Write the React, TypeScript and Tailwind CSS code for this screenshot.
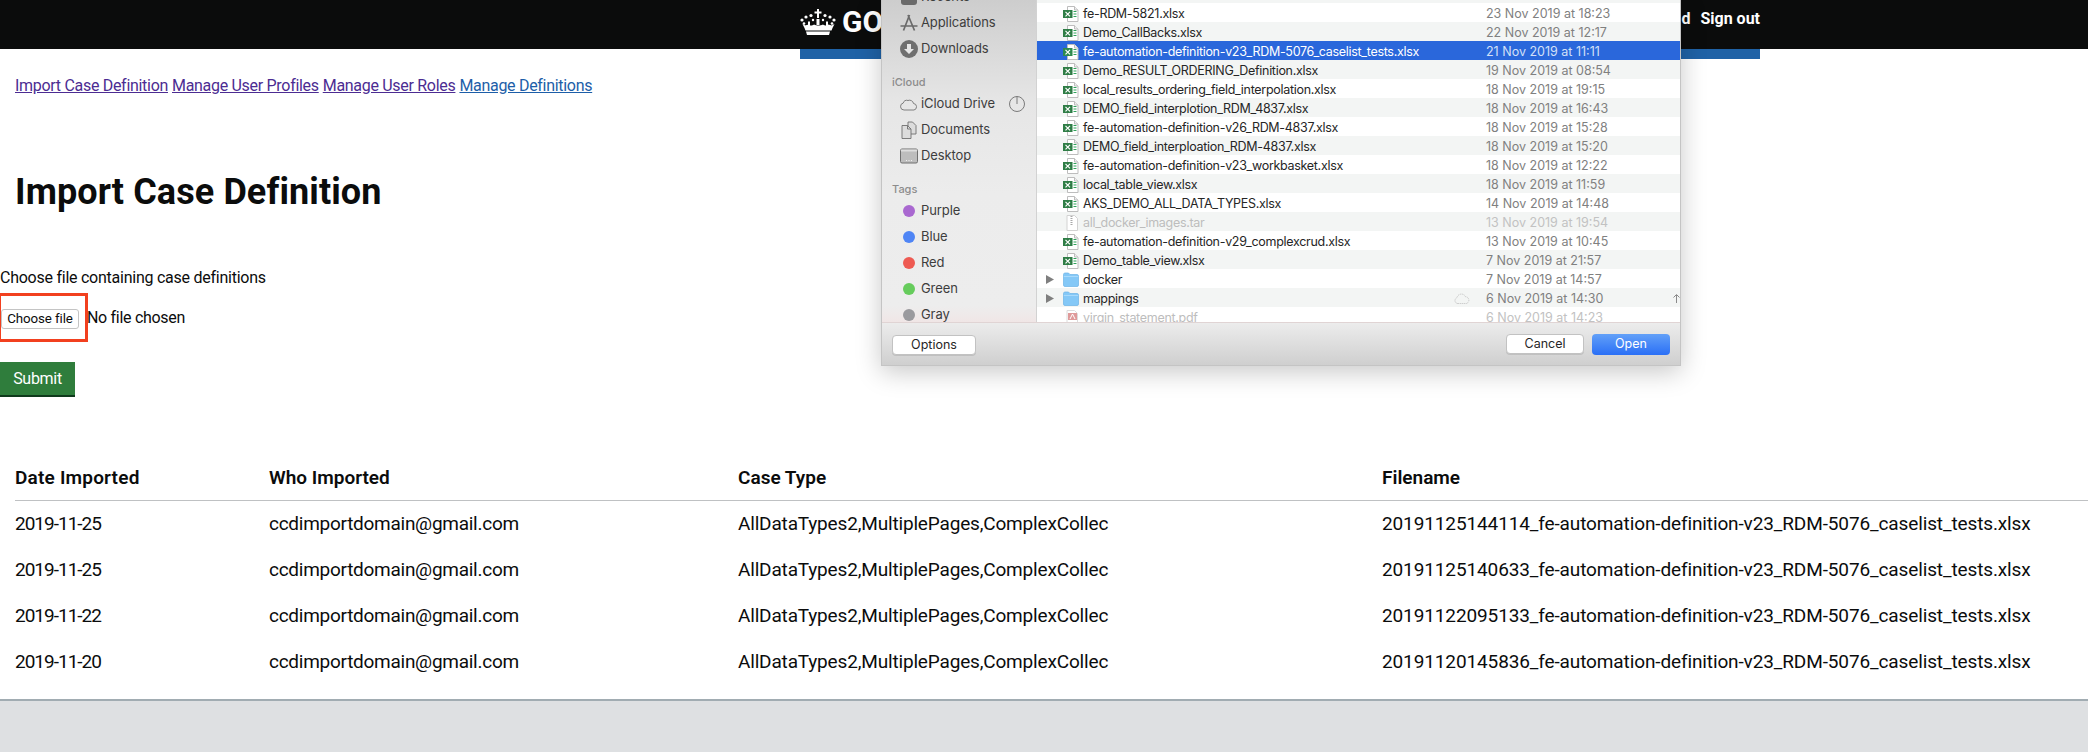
import React from "react";

const gds = { fontFamily: "Roboto, 'Liberation Sans', sans-serif" };
const mac = { fontFamily: "Inter, 'Liberation Sans', sans-serif" };

function Crown() {
  const dots: [number, number, number][] = [
    [2, 11, 1.6], [6, 8, 1.6], [11, 6.5, 1.6], [25, 6.5, 1.6], [30, 8, 1.6], [34, 11, 1.6],
    [4, 14.5, 1.3], [32, 14.5, 1.3], [13, 11, 1.2], [23, 11, 1.2],
  ];
  return (
    <svg width="36" height="26" viewBox="0 0 36 26" fill="#fff" className="shrink-0">
      {dots.map(([x, y, r], i) => <circle key={i} cx={x} cy={y} r={r} />)}
      <path d="M17 0h2v2.500h2.500v2H19V9h-2V4.500h-2.500v-2H17z" />
      <path d="M16.500 10h3v6h-3zM8 12.500h2v4.500H8zM26 12.500h2V17h-2zM5.500 16.500h25v1.500h-25z" />
      <path d="M4.500 19l-2-4 3 1.500 3-1 2.500 2 3-2 4.500 2 4.500-2 3 2 2.500-2 3 1 3-1.500-2 4-1 2.500H5.500z" />
      <path d="M6 22.500h24L29 26H7z" />
    </svg>
  );
}

function Excel({ selected }: { selected?: boolean }) {
  return (
    <svg width="16" height="16" viewBox="0 0 16 16" className="shrink-0">
      <path d="M4.500.5h7l3.500 3.500v11.500h-10.500z" fill="#fff" stroke="#bdbdbd" />
      <path d="M11.500.5v3.500h3.500" fill="#eee" stroke="#bdbdbd" />
      <rect x="0" y="4" width="9.500" height="8" fill={selected ? "#2e8a4f" : "#2f7d46"} />
      <path d="M2.500 5.800l4.500 4.500M7 5.800l-4.500 4.500" stroke="#fff" strokeWidth="1.200" />
      <path d="M10.500 5.500h3M10.500 8h3M10.500 10.500h3" stroke="#2fa35a" strokeWidth="1" />
    </svg>
  );
}

function TarIcon() {
  return (
    <svg width="16" height="16" viewBox="0 0 16 16" className="shrink-0">
      <path d="M4 .5h7.500l3 3v12H4z" fill="#fff" stroke="#d2d2d2" />
      <path d="M8.500 1v9" stroke="#a8a8a8" strokeWidth="2" strokeDasharray="1 1" />
    </svg>
  );
}

function PdfIcon() {
  return (
    <svg width="16" height="16" viewBox="0 0 16 16" className="shrink-0">
      <path d="M4 .5h7.500l3 3v12H4z" fill="#fff" stroke="#dcdcdc" />
      <rect x="5" y="3" width="9" height="7" fill="#df9a9a" />
      <path d="M7 9l2.500-5L12 9" stroke="#fff" fill="none" />
    </svg>
  );
}

function Folder() {
  return (
    <svg width="16" height="15" viewBox="0 0 16 15" className="shrink-0">
      <path d="M.5 2.500a1.500 1.500 0 0 1 1.500-1.500h3.500l1.500 1.500h7a1.500 1.500 0 0 1 1.500 1.500v9a1.500 1.500 0 0 1-1.500 1.500H2A1.500 1.500 0 0 1 .5 13z" fill="#84c8f7" stroke="#6cb3e6" strokeWidth="0.700" />
      <path d="M.8 4.500h14.400" stroke="#a9dafb" />
    </svg>
  );
}

type FileRow = { n: string; d: string; kind: "x" | "tar" | "pdf" | "dir"; off?: boolean; sel?: boolean; cloud?: boolean };

const files: FileRow[] = [
  { n: "fe-RDM-5821.xlsx", d: "23 Nov 2019 at 18:23", kind: "x" },
  { n: "Demo_CallBacks.xlsx", d: "22 Nov 2019 at 12:17", kind: "x" },
  { n: "fe-automation-definition-v23_RDM-5076_caselist_tests.xlsx", d: "21 Nov 2019 at 11:11", kind: "x", sel: true },
  { n: "Demo_RESULT_ORDERING_Definition.xlsx", d: "19 Nov 2019 at 08:54", kind: "x" },
  { n: "local_results_ordering_field_interpolation.xlsx", d: "18 Nov 2019 at 19:15", kind: "x" },
  { n: "DEMO_field_interplotion_RDM_4837.xlsx", d: "18 Nov 2019 at 16:43", kind: "x" },
  { n: "fe-automation-definition-v26_RDM-4837.xlsx", d: "18 Nov 2019 at 15:28", kind: "x" },
  { n: "DEMO_field_interploation_RDM-4837.xlsx", d: "18 Nov 2019 at 15:20", kind: "x" },
  { n: "fe-automation-definition-v23_workbasket.xlsx", d: "18 Nov 2019 at 12:22", kind: "x" },
  { n: "local_table_view.xlsx", d: "18 Nov 2019 at 11:59", kind: "x" },
  { n: "AKS_DEMO_ALL_DATA_TYPES.xlsx", d: "14 Nov 2019 at 14:48", kind: "x" },
  { n: "all_docker_images.tar", d: "13 Nov 2019 at 19:54", kind: "tar", off: true },
  { n: "fe-automation-definition-v29_complexcrud.xlsx", d: "13 Nov 2019 at 10:45", kind: "x" },
  { n: "Demo_table_view.xlsx", d: "7 Nov 2019 at 21:57", kind: "x" },
  { n: "docker", d: "7 Nov 2019 at 14:57", kind: "dir" },
  { n: "mappings", d: "6 Nov 2019 at 14:30", kind: "dir", cloud: true },
  { n: "virgin_statement.pdf", d: "6 Nov 2019 at 14:23", kind: "pdf", off: true },
];

function Row({ f, i }: { f: FileRow; i: number }) {
  const bg = f.sel ? "bg-[#2a67db]" : i % 2 === 0 ? "bg-white" : "bg-[#f3f5f4]";
  const nameColor = f.sel ? "text-white" : f.off ? "text-[#bdbdbd]" : "text-[#262626]";
  const dateColor = f.sel ? "text-[#d3e0f7]" : f.off ? "text-[#c2c2c2]" : "text-[#808080]";
  return (
    <div className={`flex items-center h-[19px] pt-[2px] shrink-0 ${bg}`}>
      <div className="w-[26px] shrink-0 pl-[9px]">
        {f.kind === "dir" && (
          <svg width="8" height="9" viewBox="0 0 8 9"><path d="M0 0l8 4.500L0 9z" fill="#7f7f7f" /></svg>
        )}
      </div>
      <div className="w-[20px] shrink-0 flex">
        {f.kind === "x" && <Excel selected={f.sel} />}
        {f.kind === "tar" && <TarIcon />}
        {f.kind === "pdf" && <PdfIcon />}
        {f.kind === "dir" && <Folder />}
      </div>
      <div className={`w-[371px] shrink-0 text-[12.500px] leading-[15px] tracking-[-0.3px] whitespace-nowrap ${nameColor}`}>{f.n}</div>
      <div className="w-[32px] shrink-0">
        {f.cloud && (
          <svg width="16" height="11" viewBox="0 0 16 11" fill="none" stroke="#bdbdbd" strokeDasharray="1 1">
            <path d="M3.500 10.500a3 3 0 0 1-.5-5.800 4.500 4.500 0 0 1 8.500-1 3.500 3.500 0 0 1 1 6.800z" />
          </svg>
        )}
      </div>
      <div className={`w-[187px] shrink-0 text-[12.500px] leading-[15px] whitespace-nowrap ${dateColor}`}>{f.d}</div>
      {f.cloud && (
        <svg width="7" height="9" viewBox="0 0 7 9" fill="none" stroke="#8a8a8a" className="shrink-0">
          <path d="M3.500 9V1M.5 3.500l3-3 3 3" />
        </svg>
      )}
    </div>
  );
}

const iconProps = { width: 18, height: 18, viewBox: "0 0 18 18", className: "shrink-0" };

const sideIcons: Record<string, React.ReactNode> = {
  Recents: <svg {...iconProps}><rect x="1" y="1" width="16" height="16" rx="3" fill="#6a6a6a" /></svg>,
  Applications: (
    <svg {...iconProps} fill="none" stroke="#6a6a6a" strokeWidth="1.700">
      <path d="M9.500 1L3.500 16.500M8 1L14.500 16.500M.5 12h17" />
    </svg>
  ),
  Downloads: (
    <svg {...iconProps}>
      <circle cx="9" cy="9" r="9" fill="#6f6f6f" />
      <path d="M7 4h4v5h3l-5 5-5-5h3z" fill="#e6e6e6" />
    </svg>
  ),
  "iCloud Drive": (
    <svg {...iconProps} fill="none" stroke="#747474" strokeWidth="0.900">
      <path d="M4 15a3.500 3.500 0 0 1-.8-6.900A3.500 3.500 0 0 1 8 5.500 4 4 0 0 1 13.500 8.500 3.300 3.300 0 0 1 14 15z" />
    </svg>
  ),
  Documents: (
    <svg {...iconProps} fill="#dcdcdc" stroke="#6f6f6f" strokeWidth="0.900">
      <path d="M8 1h4.500L16 4.500V13H8z" />
      <path d="M2 4.500h5.500L11 8v9.500H2z" />
      <path d="M7.500 4.500V8H11" fill="none" />
    </svg>
  ),
  Desktop: (
    <svg {...iconProps}>
      <rect x=".5" y="2" width="17" height="14" rx="1.500" fill="#bdbdbd" stroke="#6f6f6f" />
      <rect x="1" y="2.500" width="16" height="2" fill="#dedede" />
      <path d="M6 13.500h1M8.500 13.500h1M11 13.500h1" stroke="#f0f0f0" />
    </svg>
  ),
};

function SideItem({ label, children }: { label: string; children?: React.ReactNode }) {
  return (
    <div className="flex items-center h-[26px] pl-[18px] text-[#3d3d3d] text-[13px] tracking-[-0.1px]">
      <div className="w-[21px] flex justify-start shrink-0">{sideIcons[label]}</div>
      <span>{label}</span>
      {children}
    </div>
  );
}

function SideHead({ label }: { label: string }) {
  return (
    <div className="h-[29px] flex items-end pb-[2px] pl-[10px] text-[11px] leading-[14px] font-medium text-[#8c8c8c]">{label}</div>
  );
}

function Tag({ label, color }: { label: string; color: string }) {
  return (
    <div className="flex items-center h-[26px] pl-[21px] text-[#3d3d3d] text-[13px] tracking-[-0.1px]">
      <span className={`w-[12px] h-[12px] rounded-full mr-[6px] shrink-0 ${color}`} />
      <span>{label}</span>
    </div>
  );
}

function Dialog() {
  return (
    <div style={mac} className="absolute left-[881px] top-0 w-[800px] h-[366px] flex flex-col overflow-hidden bg-white shadow-[0_6px_24px_rgba(0,0,0,0.22)] border-x border-b border-[#c4c4c4]">
      <div className="flex h-[323px] shrink-0 overflow-hidden border-b border-[#e0d4d4]">
        <div className="w-[155px] shrink-0 border-r border-[#d2d2d2] bg-[linear-gradient(180deg,#cdcdcd_0%,#e6e6e6_32%,#ececec_60%,#ededed_95%,#f0e6e6_100%)]">
          <div className="-mt-[16px]">
            <SideItem label="Recents" />
            <SideItem label="Applications" />
            <SideItem label="Downloads" />
            <SideHead label="iCloud" />
            <SideItem label="iCloud Drive">
              <svg width="16" height="16" viewBox="0 0 16 16" fill="none" stroke="#7a7a7a" className="ml-auto mr-[11px]">
                <circle cx="8" cy="8" r="7.500" />
                <path d="M8 .5V8" />
              </svg>
            </SideItem>
            <SideItem label="Documents" />
            <SideItem label="Desktop" />
            <SideHead label="Tags" />
            <Tag label="Purple" color="bg-[#a968d0]" />
            <Tag label="Blue" color="bg-[#4f85f5]" />
            <Tag label="Red" color="bg-[#ee5a52]" />
            <Tag label="Green" color="bg-[#66cc5c]" />
            <Tag label="Gray" color="bg-[#9a9a9e]" />
          </div>
        </div>
        <div className="flex-1 min-w-0 flex flex-col">
          <div className="h-[3px] shrink-0 bg-[#f3f5f4]" />
          {files.map((f, i) => <Row key={f.n} f={f} i={i} />)}
        </div>
      </div>
      <div className="flex-1 flex items-center justify-between pl-[10px] pr-[10px] pt-[1px] bg-[linear-gradient(180deg,#ececec,#cfcfcf)] text-[12.500px]">
        <button className="w-[84px] h-[20px] bg-white rounded-[4px] border border-[#c2c2c2] text-[#262626] shadow-[0_1px_0_rgba(0,0,0,0.1)]">Options</button>
        <div className="flex gap-[8px]">
          <button className="w-[78px] h-[20px] bg-white rounded-[4px] border border-[#c2c2c2] text-[#262626] shadow-[0_1px_0_rgba(0,0,0,0.1)]">Cancel</button>
          <button className="w-[78px] h-[21px] rounded-[4px] text-white bg-[linear-gradient(180deg,#62a0f8,#2a6ff6)]">Open</button>
        </div>
      </div>
    </div>
  );
}

const rows = [
  ["2019-11-25", "20191125144114_fe-automation-definition-v23_RDM-5076_caselist_tests.xlsx"],
  ["2019-11-25", "20191125140633_fe-automation-definition-v23_RDM-5076_caselist_tests.xlsx"],
  ["2019-11-22", "20191122095133_fe-automation-definition-v23_RDM-5076_caselist_tests.xlsx"],
  ["2019-11-20", "20191120145836_fe-automation-definition-v23_RDM-5076_caselist_tests.xlsx"],
];

export default function App() {
  return (
    <div style={gds} className="relative w-[2088px] h-[752px] overflow-hidden bg-white text-[#0b0c0c]">
      <header className="h-[49px] bg-[#0b0c0c] text-white">
        <div className="ml-[800px] w-[960px] h-full flex justify-between">
          <div className="flex items-center h-[41px] mt-[1px] gap-[6px]">
            <Crown />
            <span className="text-[30px] font-bold leading-none">GOV.UK</span>
          </div>
          <div className="flex h-[37px] items-center gap-[10px] text-[16px] font-bold">
            <span>d</span>
            <span>Sign out</span>
          </div>
        </div>
      </header>
      <div className="ml-[800px] w-[960px] h-[10px] bg-[#1f62a6]" />

      <nav className="mt-[14px] pl-[15px] text-[16px] leading-[25px] tracking-[-0.3px] flex gap-[4px]">
        <a href="#" className="underline text-[#4c2c92]">Import Case Definition</a>
        <a href="#" className="underline text-[#4c2c92]">Manage User Profiles</a>
        <a href="#" className="underline text-[#4c2c92]">Manage User Roles</a>
        <a href="#" className="underline text-[#1d5ea8]">Manage Definitions</a>
      </nav>

      <h1 className="mt-[74px] pl-[15px] text-[36px] leading-[40px] tracking-[0.1px] font-bold">Import Case Definition</h1>

      <div className="mt-[56px] text-[16px] leading-[20px] tracking-[-0.25px]">Choose file containing case definitions</div>

      <div className="mt-[5px] flex items-start">
        <div className="w-[88px] h-[49px] shrink-0 border-[3px] border-l border-[#f2401f] pt-[13px]">
          <button className="block w-[78px] h-[20px] bg-white border border-[#c4c4c4] rounded-[3px] text-[13.330px] leading-none tracking-[-0.1px] whitespace-nowrap text-[#0b0c0c]">Choose file</button>
        </div>
        <span className="-ml-[1px] mt-[14px] text-[16px] leading-[22px] tracking-[-0.3px]">No file chosen</span>
      </div>

      <button className="block mt-[20px] w-[75px] h-[33px] bg-[#2f7d3c] text-white text-[16px] tracking-[-0.3px] shadow-[0_2px_0_#0f3a1c]">Submit</button>

      <table className="mt-[60px] ml-[15px] w-[2073px] table-fixed border-collapse text-[19px]">
        <thead>
          <tr className="h-[45px] border-b border-[#bfc1c3] text-left">
            <th className="w-[254px] pt-[2px] font-semibold tracking-[0.2px]">Date Imported</th>
            <th className="w-[469px] pt-[2px] font-semibold">Who Imported</th>
            <th className="w-[644px] pt-[2px] font-semibold">Case Type</th>
            <th className="pt-[2px] font-semibold">Filename</th>
          </tr>
        </thead>
        <tbody>
          {rows.map(([d, f]) => (
            <tr key={f} className="h-[46px]">
              <td className="pt-[2px] tracking-[-1px]">{d}</td>
              <td className="pt-[2px] tracking-[-0.27px]">ccdimportdomain@gmail.com</td>
              <td className="pt-[2px] tracking-[-0.17px] whitespace-nowrap">AllDataTypes2,MultiplePages,ComplexCollec</td>
              <td className="pt-[2px] tracking-[-0.12px] whitespace-nowrap">{f}</td>
            </tr>
          ))}
        </tbody>
      </table>

      <footer className="absolute left-0 right-0 bottom-0 h-[53px] bg-[#dee0e2] border-t-2 border-[#a1acb2]" />

      <Dialog />
    </div>
  );
}
